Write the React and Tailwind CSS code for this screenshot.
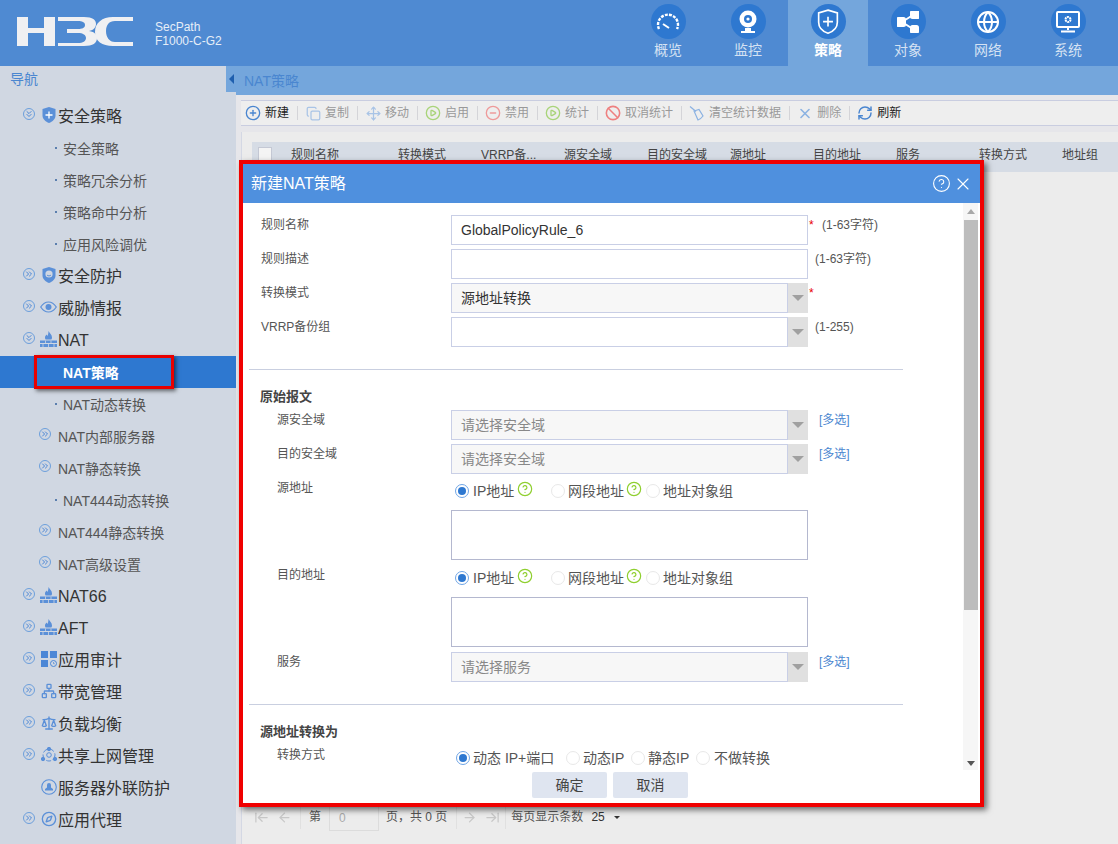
import {
  Ban, CirclePlay, CircleMinus, CirclePlus, CircleHelp, Compass, Copy, Globe, Move, Network, RefreshCw, Scale, X,
  ArrowLeft, ArrowRight, ArrowLeftToLine, ArrowRightToLine, ChevronsRight, ChevronsDown,
} from "lucide-react";

const FONT = "font-['Liberation_Sans','Noto_Sans_CJK_SC',sans-serif]";

// Icons the packages don't have
const Logo = () => (
  <svg width="117" height="29" viewBox="0 0 117 29" fill="#f0f0f2">
    <path d="M0 0h11v11h16V0h11v29H27V16H11v13H0z" />
    <path d="M41 0h26c9 0 12 3 12 7 0 3-2 6-7 7 6 1 8 4 8 7 0 5-4 8-13 8H41v-3h20c5 0 8-2 8-5s-3-5-8-5H50v-4h11c4 0 7-1 7-4s-3-4-7-4H41z" />
    <path d="M116 0v4H98c-6 0-9 4-9 10s3 11 9 11h18v4H96C85 29 78 24 78 15S85 0 96 0z" />
  </svg>
);

const Gauge = () => (
  <svg width="24" height="20" viewBox="0 0 24 20" fill="none" stroke="#fff" strokeWidth="2.4">
    <path d="M3 17a10 10 0 1 1 18 0" strokeDasharray="3 1.2" />
    <path d="M7 12l6 4" strokeWidth="2" />
  </svg>
);

const Webcam = () => (
  <svg width="20" height="24" viewBox="0 0 20 24">
    <circle cx="10" cy="9" r="8.5" fill="#fff" />
    <circle cx="10" cy="9" r="4" fill="#2e78d0" />
    <circle cx="10" cy="9" r="1.6" fill="#fff" />
    <path d="M7 18h6v3H7zM3 21h14v2H3z" fill="#fff" />
  </svg>
);

const ShieldPlus = ({ size = 22, fill = "none", stroke = "#fff" }) => (
  <svg width={size} height={size * 1.15} viewBox="0 0 20 23" fill={fill} stroke={stroke} strokeWidth="1.5">
    <path d="M10 1l8.5 2.5V12c0 5-4 8.500-8.500 10C5.500 20.500 1.500 17 1.500 12V3.500z" />
    <path d="M10 7v9M5.500 11.500h9" />
  </svg>
);

const ShareNodes = () => (
  <svg width="22" height="22" viewBox="0 0 22 22" stroke="#fff" strokeWidth="2" fill="#fff">
    <path d="M5 11l11-7M5 11l11 7" />
    <rect x="0" y="7" width="8" height="8" rx="1.500" />
    <rect x="14" y="0" width="8" height="7" rx="1.500" />
    <rect x="14" y="15" width="7" height="7" rx="1.500" />
  </svg>
);

const MonitorGear = () => (
  <svg width="24" height="22" viewBox="0 0 24 22" fill="none" stroke="#fff">
    <rect x="1" y="1" width="22" height="15" rx="1" strokeWidth="2" />
    <circle cx="12" cy="8.500" r="2.500" strokeWidth="2" strokeDasharray="2 .6" />
    <path d="M12 16v3M5 20.500h14" strokeWidth="2" />
  </svg>
);

const Firewall = () => (
  <svg width="17" height="16" viewBox="0 0 17 16" fill="#5b90d8">
    <path d="M8.500 0c1 2 3.500 3.500 3.500 6.500 0 1-.3 1.500-.6 2H5.600c-.3-.5-.6-1-.6-2 0-1.500 1-2 1.500-3 .5.800.8 1 1 1.500C8 4 8.500 2 8.500 0z" />
    <path d="M0 9.500h17V12H0zM0 13h17v3H0z" />
    <path d="M5.500 9.500v2.500M11 9.500v2.500M3 13v3M8.500 13v3M14 13v3" stroke="#d0d7e2" strokeWidth=".8" />
  </svg>
);

const ShieldFace = () => (
  <svg width="14" height="16" viewBox="0 0 14 16">
    <path d="M7 0l6.500 2v6.500C13.500 12 10.500 14.500 7 16 3.500 14.500.5 12 .5 8.500V2z" fill="#5b90d8" />
    <circle cx="7" cy="7" r="3.600" fill="#d0d7e2" />
    <path d="M5 8c1 1.200 3 1.200 4 0" stroke="#5b90d8" fill="none" />
  </svg>
);

const ShieldFilled = () => (
  <svg width="14" height="16" viewBox="0 0 14 16">
    <path d="M7 0l6.500 2v6.500C13.500 12 10.500 14.500 7 16 3.500 14.500.5 12 .5 8.500V2z" fill="#5b90d8" />
    <path d="M7 4.500v7M3.500 8h7" stroke="#fff" strokeWidth="1.300" />
  </svg>
);

const Eye = () => (
  <svg width="17" height="12" viewBox="0 0 17 12" fill="none" stroke="#5b90d8" strokeWidth="1.200">
    <path d="M.7 6C3 2.500 5.700 1 8.500 1s5.500 1.500 7.800 5c-2.300 3.500-5 5-7.800 5S3 9.500.7 6z" />
    <circle cx="8.500" cy="6" r="3" fill="#5b90d8" stroke="none" />
  </svg>
);

const AppAudit = () => (
  <svg width="16" height="16" viewBox="0 0 16 16" fill="#4c87d6">
    <rect width="7" height="7" />
    <rect x="9" width="7" height="7" />
    <rect y="9" width="7" height="7" />
    <circle cx="12.500" cy="12.500" r="3" fill="none" stroke="#4c87d6" />
    <path d="M12.500 11v1.700h1.200" fill="none" stroke="#4c87d6" strokeWidth=".7" />
  </svg>
);

const ShareRing = () => (
  <svg width="16" height="16" viewBox="0 0 16 16" fill="none" stroke="#5b90d8" strokeWidth="1">
    <circle cx="8" cy="8" r="6" strokeDasharray="5 2" />
    <circle cx="8" cy="2" r="1.700" fill="#5b90d8" />
    <circle cx="2" cy="12" r="1.700" fill="#5b90d8" />
    <circle cx="14" cy="12" r="1.700" fill="#5b90d8" />
    <circle cx="8" cy="8" r="2.300" />
  </svg>
);

const ServerGuard = () => (
  <svg width="16" height="16" viewBox="0 0 16 16" fill="none" stroke="#5b90d8" strokeWidth="1.100">
    <circle cx="8" cy="8" r="7.300" />
    <path d="M4 11.500h8V10L10 8.500V6a2 2 0 1 0-4 0v2.500L4 10z" fill="#5b90d8" stroke="none" />
  </svg>
);

const Broom = () => (
  <svg width="16" height="16" viewBox="0 0 16 16" fill="none" stroke="#8bb2e2" strokeWidth="1.200">
    <path d="M1 1.500l6 5" />
    <path d="M5 6l5-1.500 4 6.500c-1.500 2-3 3.500-5 4L5 6z" />
  </svg>
);

const Triangle = ({ className }) => (
  <span className={`w-0 h-0 border-x-[6px] border-x-transparent border-t-[6px] ${className}`} />
);

const ArrowCircle = ({ down }) => (
  <span className="w-3 h-3 rounded-full border border-[#6c9fdc] flex items-center justify-center shrink-0 -mt-[4px]">
    {down ? (
      <ChevronsDown size={10} color="#4c87d6" strokeWidth={2.4} />
    ) : (
      <ChevronsRight size={10} color="#4c87d6" strokeWidth={2.4} />
    )}
  </span>
);

const topTabs = [
  { label: "概览", icon: <Gauge /> },
  { label: "监控", icon: <Webcam /> },
  { label: "策略", icon: <ShieldPlus />, active: true },
  { label: "对象", icon: <ShareNodes /> },
  { label: "网络", icon: <Globe size={24} color="#fff" strokeWidth={2} /> },
  { label: "系统", icon: <MonitorGear /> },
];

// kind: top = first level, leaf = second level with a dot, branch = second level with an arrow
const navItems = [
  { kind: "top", label: "安全策略", open: true, icon: <ShieldFilled /> },
  { kind: "leaf", label: "安全策略" },
  { kind: "leaf", label: "策略冗余分析" },
  { kind: "leaf", label: "策略命中分析" },
  { kind: "leaf", label: "应用风险调优" },
  { kind: "top", label: "安全防护", icon: <ShieldFace /> },
  { kind: "top", label: "威胁情报", icon: <Eye /> },
  { kind: "top", label: "NAT", open: true, icon: <Firewall /> },
  { kind: "leaf", label: "NAT策略", active: true },
  { kind: "leaf", label: "NAT动态转换" },
  { kind: "branch", label: "NAT内部服务器" },
  { kind: "branch", label: "NAT静态转换" },
  { kind: "leaf", label: "NAT444动态转换" },
  { kind: "branch", label: "NAT444静态转换" },
  { kind: "branch", label: "NAT高级设置" },
  { kind: "top", label: "NAT66", icon: <Firewall /> },
  { kind: "top", label: "AFT", icon: <Firewall /> },
  { kind: "top", label: "应用审计", icon: <AppAudit /> },
  { kind: "top", label: "带宽管理", icon: <Network size={16} color="#5b90d8" /> },
  { kind: "top", label: "负载均衡", icon: <Scale size={16} color="#5b90d8" /> },
  { kind: "top", label: "共享上网管理", icon: <ShareRing /> },
  { kind: "top", label: "服务器外联防护", icon: <ServerGuard />, noArrow: true },
  { kind: "top", label: "应用代理", icon: <Compass size={16} color="#5b90d8" /> },
];

const toolItems = [
  { label: "新建", on: true, icon: <CirclePlus size={16} color="#4a86d0" /> },
  { label: "复制", icon: <Copy size={15} color="#a9c4e6" /> },
  { label: "移动", icon: <Move size={15} color="#a9c4e6" /> },
  { label: "启用", icon: <CirclePlay size={16} color="#a9d47a" /> },
  { label: "禁用", icon: <CircleMinus size={16} color="#ee9a9a" /> },
  { label: "统计", icon: <CirclePlay size={16} color="#a9d47a" /> },
  { label: "取消统计", icon: <Ban size={16} color="#ee8080" strokeWidth={2.4} /> },
  { label: "清空统计数据", icon: <Broom /> },
  { label: "删除", icon: <X size={17} color="#8bb2e2" strokeWidth={2.4} /> },
  { label: "刷新", on: true, icon: <RefreshCw size={16} color="#4a86d0" strokeWidth={2.2} /> },
];

const columns = [
  ["规则名称", "w-[107px]"],
  ["转换模式", "w-[83px]"],
  ["VRRP备...", "w-[83px]"],
  ["源安全域", "w-[83px]"],
  ["目的安全域", "w-[83px]"],
  ["源地址", "w-[83px]"],
  ["目的地址", "w-[83px]"],
  ["服务", "w-[83px]"],
  ["转换方式", "w-[83px]"],
  ["地址组", "w-[56px]"],
];

const NavRow = ({ item }) => {
  if (item.kind === "leaf") {
    return (
      <div className={`relative h-8 flex items-center text-sm ${item.active ? "bg-[#2e78d0] text-white font-semibold" : "text-[#555]"}`}>
        {!item.active && <span className="absolute left-[55px] top-[15px] w-[2px] h-[2px] bg-[#5b7fae]" />}
        <span className="pl-[63px] pt-[2px]">{item.label}</span>
        {item.active && (
          <span className="absolute left-[34px] -top-[1px] w-[140px] h-[34px] border-[3px] border-[#e80000] shadow-[2px_2px_4px_rgba(0,0,0,0.55)]" />
        )}
      </div>
    );
  }
  if (item.kind === "branch") {
    return (
      <div className="h-8 flex items-center text-sm text-[#555] pl-[39px] gap-[7px]">
        <ArrowCircle />
        <span className="pt-[2px]">{item.label}</span>
      </div>
    );
  }
  return (
    <div className="h-8 flex items-center text-base text-[#333] pl-[23px]">
      <span className="w-4 shrink-0">{!item.noArrow && <ArrowCircle down={item.open} />}</span>
      <span className="w-[19px] h-4 flex items-center justify-center shrink-0 -mt-[2px]">{item.icon}</span>
      <span className="pt-[2px]">{item.label}</span>
    </div>
  );
};

const Radio = ({ checked }) => (
  <span
    className={`w-[14px] h-[14px] rounded-full flex items-center justify-center shrink-0 border ${
      checked ? "border-[#6fa5e6]" : "border-[#e8e8e8]"
    }`}
  >
    {checked && <span className="w-2 h-2 rounded-full bg-[#2e78d0]" />}
  </span>
);

const Hint = () => <CircleHelp size={16} color="#8fcf2f" strokeWidth={1.8} className="-mt-[5px] -mx-px shrink-0" />;

const FormRow = ({ label, sub, children }) => (
  <div className="flex">
    <div className={`w-[190px] shrink-0 text-xs text-[#555] leading-[20px] ${sub ? "pl-4" : ""}`}>{label}</div>
    {children}
  </div>
);

const Select = ({ value, placeholder, muted }) => (
  <div className="w-[357px] h-[30px] flex shrink-0">
    <div className={`flex-1 border border-[#c9cfe6] flex items-center pl-[9px] text-sm ${muted ? "bg-[#f7f7f7]" : "bg-white"} ${value ? "text-[#333]" : "text-[#888]"}`}>
      {value || placeholder}
    </div>
    <div className="w-5 bg-[#e0e0e0] flex items-center justify-center">
      <Triangle className="border-t-[#a0a0a0]" />
    </div>
  </div>
);

const Note = ({ children, star }) => (
  <div className="flex text-xs text-[#555] leading-[20px]">
    {star && <span className="text-[#e80000] w-[7px] -mr-[7px] ml-[1px]">*</span>}
    <span className={star ? "pl-[13px]" : "pl-[7px]"}>{children}</span>
  </div>
);

const Multi = () => <div className="pl-[11px] text-xs text-[#4a86d0] leading-[20px]">[多选]</div>;

const AddressField = ({ label }) => (
  <FormRow label={label} sub>
    <div>
      <div className="h-[26px] flex items-center text-sm text-[#555]">
        <span className="w-[100px] flex items-center pl-[4px] gap-[4px]">
          <Radio checked />
          <span>IP地址</span>
          <Hint />
        </span>
        <span className="w-[95px] flex items-center gap-[3px]">
          <Radio />
          <span>网段地址</span>
          <Hint />
        </span>
        <span className="flex items-center gap-[3px]">
          <Radio />
          <span>地址对象组</span>
        </span>
      </div>
      <div className="mt-[6px] w-[357px] h-[50px] border border-[#b4b8cf] bg-white" />
    </div>
  </FormRow>
);

const NatDialog = () => (
  <div className="absolute left-[239px] top-[160px] w-[745px] h-[647px] border-4 border-[#f00000] bg-white flex flex-col shadow-[3px_3px_6px_rgba(0,0,0,0.55)]">
    <div className="h-[39px] shrink-0 bg-[#4f90de] flex items-center justify-between pl-2 pr-[7px] text-white text-base">
      <span>新建NAT策略</span>
      <span className="flex items-center gap-[2px]">
        <CircleHelp size={19} color="#fff" strokeWidth={1.4} />
        <X size={20} color="#fff" strokeWidth={1.3} />
      </span>
    </div>

    <div className="flex h-[567px] shrink-0">
      <div className="flex-1 overflow-hidden pt-[12px] pl-[18px]">
        <div className="flex flex-col gap-[4px]">
          <FormRow label="规则名称">
            <div className="w-[357px] h-[30px] border border-[#c9cfe6] flex items-center pl-[9px] text-sm text-[#333]">GlobalPolicyRule_6</div>
            <Note star>(1-63字符)</Note>
          </FormRow>
          <FormRow label="规则描述">
            <div className="w-[357px] h-[30px] border border-[#c9cfe6]" />
            <Note>(1-63字符)</Note>
          </FormRow>
          <FormRow label="转换模式">
            <Select value="源地址转换" muted />
            <Note star />
          </FormRow>
          <FormRow label="VRRP备份组">
            <Select />
            <Note>(1-255)</Note>
          </FormRow>
        </div>

        <div className="ml-[-12px] mt-[22px] w-[654px] border-t border-[#c9cfe0]" />
        <div className="-ml-px mt-[17px] mb-[3px] h-5 leading-5 text-[13px] font-bold text-[#444]">原始报文</div>

        <div className="flex flex-col gap-[4px]">
          <FormRow label="源安全域" sub>
            <Select placeholder="请选择安全域" muted />
            <Multi />
          </FormRow>
          <FormRow label="目的安全域" sub>
            <Select placeholder="请选择安全域" muted />
            <Multi />
          </FormRow>
          <AddressField label="源地址" />
          <div className="mt-px">
            <AddressField label="目的地址" />
          </div>
          <div className="mt-px">
            <FormRow label="服务" sub>
              <Select placeholder="请选择服务" muted />
              <Multi />
            </FormRow>
          </div>
        </div>

        <div className="ml-[-12px] mt-[22px] w-[654px] border-t border-[#c9cfe0]" />
        <div className="-ml-px mt-[17px] mb-[3px] h-5 leading-5 text-[13px] font-bold text-[#444]">源地址转换为</div>

        <FormRow label="转换方式" sub>
          <div className="h-[26px] flex items-center text-sm text-[#555] pl-[5px]">
            <Radio checked />
            <span className="ml-[3px] w-[93px]">动态 IP+端口</span>
            <Radio />
            <span className="ml-[3px] w-[48px]">动态IP</span>
            <Radio />
            <span className="ml-[3px] w-[48px]">静态IP</span>
            <Radio />
            <span className="ml-[4px]">不做转换</span>
          </div>
        </FormRow>
      </div>

      <div className="w-[15px] mr-[2px] shrink-0 flex flex-col items-center bg-[#f6f6f6]">
        <div className="h-[17px] flex items-center justify-center">
          <Triangle className="rotate-180 !border-x-[4px] !border-t-[5px] border-t-[#a8a8a8]" />
        </div>
        <div className="w-[14px] h-[390px] bg-[#bdbdbd]" />
        <div className="flex-1" />
        <div className="h-[14px] flex items-center justify-center">
          <Triangle className="!border-x-[4px] !border-t-[5px] border-t-[#555]" />
        </div>
      </div>
    </div>

    <div className="flex justify-center gap-[6px] pt-[2px] pr-[3px]">
      <button className="w-[75px] h-[26px] rounded-[2px] bg-[#dfe5f0] text-sm text-[#444]">确定</button>
      <button className="w-[75px] h-[26px] rounded-[2px] bg-[#dfe5f0] text-sm text-[#444]">取消</button>
    </div>
  </div>
);

export default function App() {
  return (
    <div className={`relative w-[1118px] h-[844px] overflow-hidden flex flex-col bg-[#ececec] ${FONT}`}>
      {/* Top bar */}
      <header className="h-[66px] shrink-0 bg-[#4f8ad2] flex items-start">
        <div className="pl-[17px] pt-[17px]">
          <Logo />
        </div>
        <div className="pl-[21px] pt-[20px] text-xs leading-[14px] text-[#e6eef8]">
          <div>SecPath</div>
          <div>F1000-C-G2</div>
        </div>
        <nav className="ml-auto mr-[10px] flex">
          {topTabs.map((tab) => (
            <div key={tab.label} className={`w-20 h-[66px] flex flex-col items-center pt-1 ${tab.active ? "bg-[#74a6dc]" : ""}`}>
              <div className="w-[35px] h-[35px] rounded-full bg-[#2e78d0] flex items-center justify-center">{tab.icon}</div>
              <div className={`mt-[1px] text-sm leading-[20px] ${tab.active ? "text-white font-semibold" : "text-[#d5e2f3]"}`}>{tab.label}</div>
            </div>
          ))}
        </nav>
      </header>

      <div className="flex flex-1 min-h-0">
        {/* Left navigation */}
        <aside className="w-[236px] shrink-0 bg-[#d0d7e2] flex flex-col">
          <div className="h-[26px] relative flex items-center pl-[10px] text-sm text-[#4a86d0]">
            导航
            <span className="absolute right-0 top-0 w-[10px] h-[26px] bg-[#74a6dc] flex items-center justify-center">
              <span className="w-0 h-0 border-y-[5px] border-y-transparent border-r-[5px] border-r-[#1f5fae]" />
            </span>
          </div>
          <div className="pt-[8px]">
            {navItems.map((item, i) => (
              <NavRow key={i} item={item} />
            ))}
          </div>
        </aside>

        {/* Main area */}
        <main className="flex-1 min-w-0 flex flex-col bg-[#e6e6ea]">
          <div className="h-[29px] shrink-0 bg-[#74a6dc] flex items-center pl-2 text-sm text-[#4a86d0]">NAT策略</div>

          <div className="mt-[5px] ml-[5px] h-[26px] shrink-0 bg-[#eeeeee] border-y border-[#c9cde0] flex items-center pl-[4px]">
            {toolItems.map((tool, i) => (
              <div key={tool.label} className="flex items-center">
                {i > 0 && <span className="w-px h-[14px] bg-[#d4d4d8] ml-[8px] mr-[7px]" />}
                <span className="w-4 flex items-center justify-center mr-[4px]">{tool.icon}</span>
                <span className={`text-xs ${tool.on ? "text-[#222]" : "text-[#999]"}`}>{tool.label}</span>
              </div>
            ))}
          </div>

          <div className="mt-[6px] ml-[5px] flex-1 min-h-0 bg-[#ececec] border-l border-[#d4d8e4] flex flex-col pt-[10px]">
            <div className="ml-[10px] h-[30px] shrink-0 bg-[#d6dce5] flex items-start pt-[5px] text-xs text-[#444] whitespace-nowrap">
              <span className="ml-[6px] w-[14px] h-[14px] bg-[#f4f4f4] border border-[#c4c8d4] mr-[19px] shrink-0" />
              {columns.map(([name, width]) => (
                <span key={name} className={`${width} shrink-0 leading-4`}>{name}</span>
              ))}
            </div>
            <div className="flex-1" />
            <div className="h-[39px] shrink-0 flex items-start pl-[12px] text-xs text-[#555]">
              <span className="flex items-center gap-2 h-[24px] text-[#c8c8c8]">
                <ArrowLeftToLine size={15} />
                <ArrowLeft size={15} />
              </span>
              <span className="ml-[8px] w-px h-[24px] bg-[#e0e0e0]" />
              <span className="ml-[8px] leading-[24px]">第</span>
              <span className="ml-[8px] w-[50px] h-[26px] border border-[#dcdcdc] flex items-center pl-[9px] text-[#aaa]">0</span>
              <span className="ml-[7px] leading-[24px] whitespace-pre">页，共 0 页</span>
              <span className="ml-[9px] w-px h-[24px] bg-[#e0e0e0]" />
              <span className="ml-[5px] flex items-center gap-2 h-[24px] text-[#c8c8c8]">
                <ArrowRight size={15} />
                <ArrowRightToLine size={15} />
              </span>
              <span className="ml-[5px] w-px h-[24px] bg-[#e0e0e0]" />
              <span className="ml-[5px] leading-[24px]">每页显示条数</span>
              <span className="ml-[8px] leading-[24px] text-[#333]">25</span>
              <span className="ml-[9px] mt-[11px] w-0 h-0 border-x-[3px] border-x-transparent border-t-[3px] border-t-[#333]" />
            </div>
          </div>
        </main>
      </div>

      <NatDialog />
    </div>
  );
}
